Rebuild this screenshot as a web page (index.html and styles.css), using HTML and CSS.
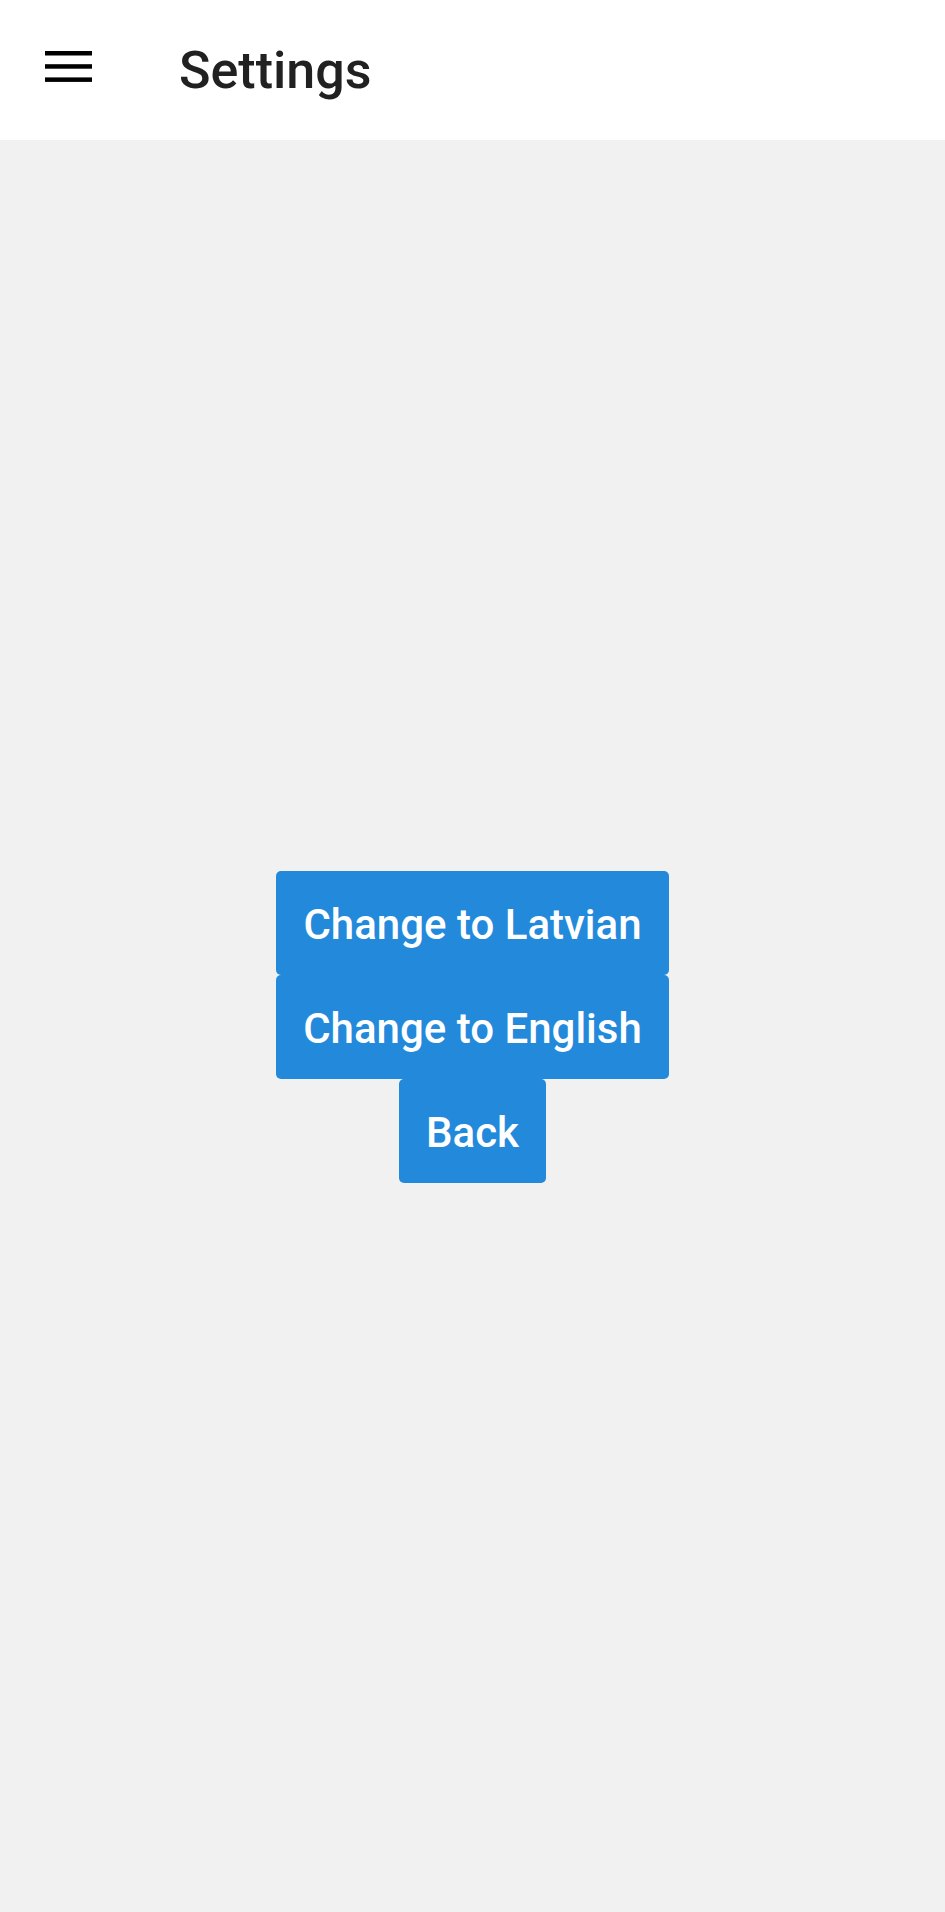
FILE: index.html
```html
<!DOCTYPE html>
<html>
<head>
<meta charset="utf-8">
<link rel="stylesheet" href="styles.css">
</head>
<body>
<div class="app">
  <header class="topbar">
    <button class="menu-btn" aria-label="Menu">
      <svg width="47" height="31" viewBox="0 0 47 31">
        <rect x="0" y="0" width="47" height="4.5" fill="#000"/>
        <rect x="0" y="13.2" width="47" height="4.5" fill="#000"/>
        <rect x="0" y="26.4" width="47" height="4.5" fill="#000"/>
      </svg>
    </button>
    <h1 class="title">Settings</h1>
  </header>
  <main class="content">
    <div class="actions">
      <button class="btn">Change to Latvian</button>
      <button class="btn">Change to English</button>
      <button class="btn">Back</button>
    </div>
  </main>
</div>
</body>
</html>
```
FILE: styles.css
```css
html, body {
  margin: 0;
  padding: 0;
  height: 100%;
}
body {
  font-family: Roboto, "Noto Sans", sans-serif;
  background: #f1f1f1;
}
.app {
  display: flex;
  flex-direction: column;
  height: 1912px;
}
.topbar {
  height: 140px;
  flex: 0 0 140px;
  background: #ffffff;
  display: flex;
  align-items: center;
}
.menu-btn {
  border: 0;
  background: none;
  padding: 0;
  margin-left: 45px;
  width: 47px;
  height: 31px;
  display: flex;
  align-self: flex-start;
  margin-top: 51px;
}
.title {
  margin: 0 0 0 87px;
  font-size: 52px;
  font-weight: 500;
  color: #212121;
  letter-spacing: 0;
}
.content {
  flex: 1;
  display: flex;
  align-items: center;
  justify-content: center;
  padding-top: 2px;
}
.actions {
  display: flex;
  flex-direction: column;
  align-items: center;
}
.btn {
  border: 0;
  margin: 0;
  background: #2389db;
  color: #ffffff;
  font-family: Roboto, "Noto Sans", sans-serif;
  font-size: 42px;
  font-weight: 500;
  height: 104px;
  padding: 4px 27px 0;
  border-radius: 5px;
  line-height: 1;
}
```
